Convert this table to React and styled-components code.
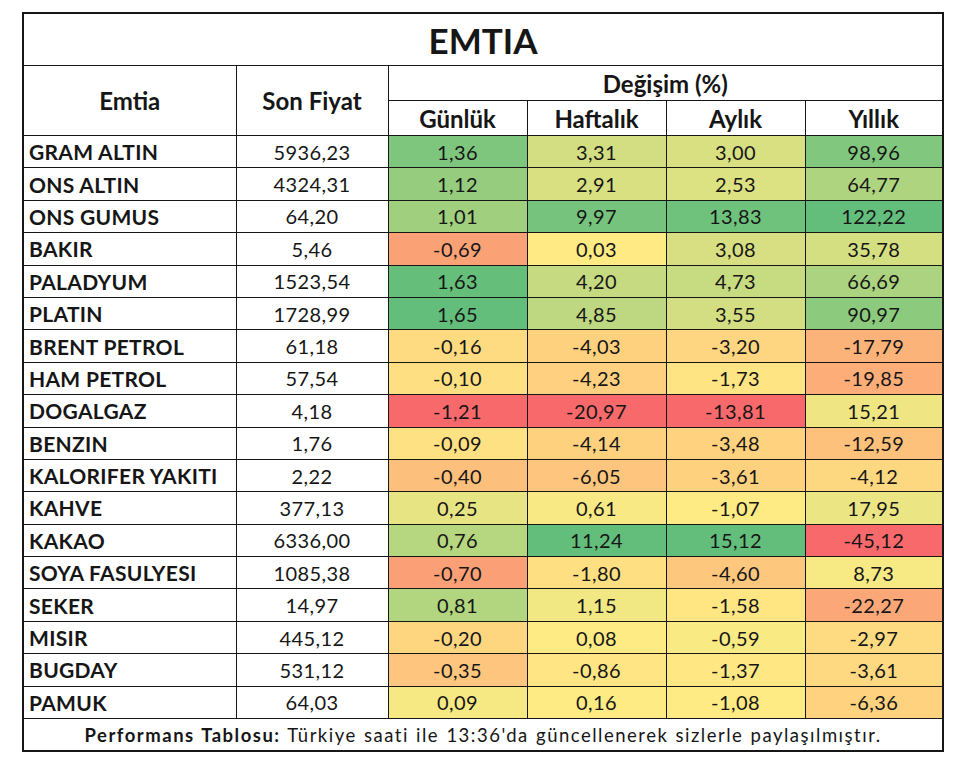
import React from 'react';
import styled, { createGlobalStyle } from 'styled-components';

const GlobalStyle = createGlobalStyle`
  html, body {
    margin: 0;
    padding: 0;
    background: #ffffff;
  }
  body {
    font-family: Lato, 'Open Sans', sans-serif;
    color: #161616;
  }
`;

const rows = [
  ['GRAM ALTIN', '5936,23', '1,36', '3,31', '3,00', '98,96'],
  ['ONS ALTIN', '4324,31', '1,12', '2,91', '2,53', '64,77'],
  ['ONS GUMUS', '64,20', '1,01', '9,97', '13,83', '122,22'],
  ['BAKIR', '5,46', '-0,69', '0,03', '3,08', '35,78'],
  ['PALADYUM', '1523,54', '1,63', '4,20', '4,73', '66,69'],
  ['PLATIN', '1728,99', '1,65', '4,85', '3,55', '90,97'],
  ['BRENT PETROL', '61,18', '-0,16', '-4,03', '-3,20', '-17,79'],
  ['HAM PETROL', '57,54', '-0,10', '-4,23', '-1,73', '-19,85'],
  ['DOGALGAZ', '4,18', '-1,21', '-20,97', '-13,81', '15,21'],
  ['BENZIN', '1,76', '-0,09', '-4,14', '-3,48', '-12,59'],
  ['KALORIFER YAKITI', '2,22', '-0,40', '-6,05', '-3,61', '-4,12'],
  ['KAHVE', '377,13', '0,25', '0,61', '-1,07', '17,95'],
  ['KAKAO', '6336,00', '0,76', '11,24', '15,12', '-45,12'],
  ['SOYA FASULYESI', '1085,38', '-0,70', '-1,80', '-4,60', '8,73'],
  ['SEKER', '14,97', '0,81', '1,15', '-1,58', '-22,27'],
  ['MISIR', '445,12', '-0,20', '0,08', '-0,59', '-2,97'],
  ['BUGDAY', '531,12', '-0,35', '-0,86', '-1,37', '-3,61'],
  ['PAMUK', '64,03', '0,09', '0,16', '-1,08', '-6,36'],
];

const num = (s) => parseFloat(s.replace(',', '.'));

const RED = [248, 105, 107];
const YELLOW = [255, 235, 132];
const GREEN = [99, 190, 123];

const mix = (a, b, t) =>
  `rgb(${a.map((v, i) => Math.round(v + (b[i] - v) * t)).join(',')})`;

// excel style 3 colour scale: min red, median yellow, max green
const scaleFor = (col) => {
  const vals = rows.map((r) => num(r[col]));
  const sorted = [...vals].sort((a, b) => a - b);
  const min = sorted[0];
  const max = sorted[sorted.length - 1];
  const mid = sorted.length / 2;
  const median = (sorted[mid - 1] + sorted[mid]) / 2;
  return (v) => {
    if (v <= median) return mix(RED, YELLOW, (v - min) / (median - min));
    return mix(YELLOW, GREEN, (v - median) / (max - median));
  };
};

const scales = [2, 3, 4, 5].map(scaleFor);

const Page = styled.div`
  padding: 12px 0 0 22px;
`;

const Table = styled.table`
  border-collapse: collapse;
  table-layout: fixed;
  width: 920px;
  border: 2px solid #161616;
`;

const Cell = styled.td`
  border: 1px solid #161616;
  padding: 0;
  text-align: center;
  font-size: 20px;
  letter-spacing: 0.4px;
  line-height: 1;
  height: 31.4px;
  background: ${({ $bg }) => $bg || '#ffffff'};
`;

const NameCell = styled(Cell)`
  text-align: left;
  padding-left: 5px;
  font-weight: 700;
  font-size: 21px;
  letter-spacing: 0.3px;
  white-space: nowrap;
`;

const TitleCell = styled.th`
  height: 51px;
  font-size: 35px;
  font-weight: 700;
  text-align: center;
  border: 1px solid #161616;
  padding: 0;
`;

const HeadCell = styled.th`
  height: 34px;
  font-size: 24px;
  font-weight: 700;
  text-align: center;
  border: 1px solid #161616;
  padding: 0;
`;

const FootCell = styled.td`
  height: 31px;
  font-size: 18.5px;
  letter-spacing: 1.5px;
  word-spacing: 1px;
  text-align: center;
  white-space: nowrap;
  border: 1px solid #161616;
  padding: 0;
`;

const App = () => (
  <Page>
    <GlobalStyle />
    <Table>
      <colgroup>
        <col style={{ width: 213 }} />
        <col style={{ width: 152 }} />
        <col style={{ width: 139 }} />
        <col style={{ width: 139 }} />
        <col style={{ width: 139 }} />
        <col style={{ width: 138 }} />
      </colgroup>
      <thead>
        <tr>
          <TitleCell colSpan={6}>EMTIA</TitleCell>
        </tr>
        <tr>
          <HeadCell rowSpan={2}>Emtia</HeadCell>
          <HeadCell rowSpan={2}>Son Fiyat</HeadCell>
          <HeadCell colSpan={4}>Değişim (%)</HeadCell>
        </tr>
        <tr>
          <HeadCell>Günlük</HeadCell>
          <HeadCell>Haftalık</HeadCell>
          <HeadCell>Aylık</HeadCell>
          <HeadCell>Yıllık</HeadCell>
        </tr>
      </thead>
      <tbody>
        {rows.map(([name, price, ...changes]) => (
          <tr key={name}>
            <NameCell>{name}</NameCell>
            <Cell>{price}</Cell>
            {changes.map((c, i) => (
              <Cell key={i} $bg={scales[i](num(c))}>
                {c}
              </Cell>
            ))}
          </tr>
        ))}
      </tbody>
      <tfoot>
        <tr>
          <FootCell colSpan={6}>
            <b>Performans Tablosu:</b> Türkiye saati ile 13:36'da güncellenerek sizlerle paylaşılmıştır.
          </FootCell>
        </tr>
      </tfoot>
    </Table>
  </Page>
);

export default App;
